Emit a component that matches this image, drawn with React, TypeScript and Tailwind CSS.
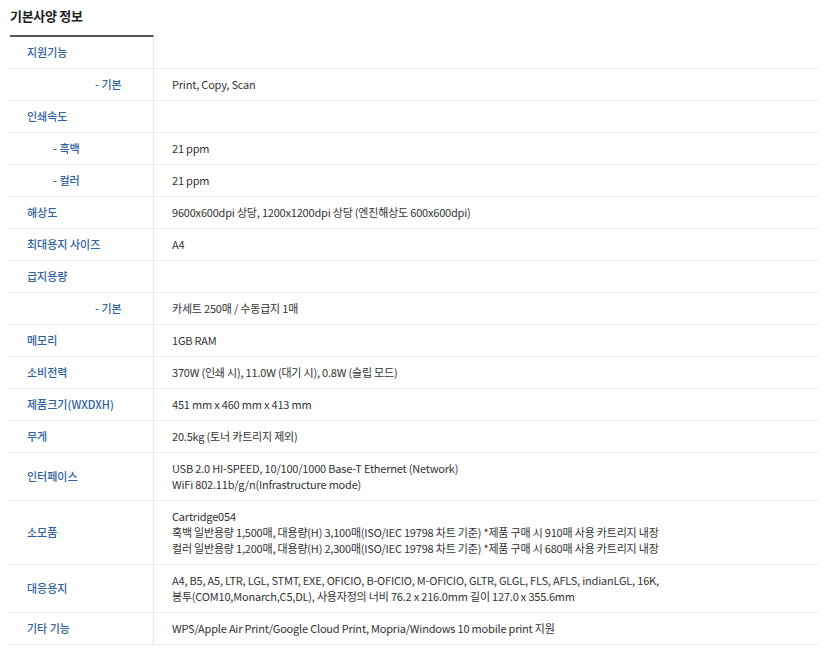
import React from 'react';

type Row = { label: string; indent?: 'sm' | 'lg'; lines: string[] };

const rows: Row[] = [
  { label: '지원기능', lines: [] },
  { label: '- 기본', indent: 'lg', lines: ['Print, Copy, Scan'] },
  { label: '인쇄속도', lines: [] },
  { label: '- 흑백', indent: 'sm', lines: ['21 ppm'] },
  { label: '- 컬러', indent: 'sm', lines: ['21 ppm'] },
  { label: '해상도', lines: ['9600x600dpi 상당, 1200x1200dpi 상당 (엔진해상도 600x600dpi)'] },
  { label: '최대용지 사이즈', lines: ['A4'] },
  { label: '급지용량', lines: [] },
  { label: '- 기본', indent: 'lg', lines: ['카세트 250매 / 수동급지 1매'] },
  { label: '메모리', lines: ['1GB RAM'] },
  { label: '소비전력', lines: ['370W (인쇄 시), 11.0W (대기 시), 0.8W (슬립 모드)'] },
  { label: '제품크기(WXDXH)', lines: ['451 mm x 460 mm x 413 mm'] },
  { label: '무게', lines: ['20.5kg (토너 카트리지 제외)'] },
  {
    label: '인터페이스',
    lines: ['USB 2.0 HI-SPEED, 10/100/1000 Base-T Ethernet (Network)', 'WiFi 802.11b/g/n(Infrastructure mode)'],
  },
  {
    label: '소모품',
    lines: [
      'Cartridge054',
      '흑백 일반용량 1,500매, 대용량(H) 3,100매(ISO/IEC 19798 차트 기준) *제품 구매 시 910매 사용 카트리지 내장',
      '컬러 일반용량 1,200매, 대용량(H) 2,300매(ISO/IEC 19798 차트 기준) *제품 구매 시 680매 사용 카트리지 내장',
    ],
  },
  {
    label: '대응용지',
    lines: [
      'A4, B5, A5, LTR, LGL, STMT, EXE, OFICIO, B-OFICIO, M-OFICIO, GLTR, GLGL, FLS, AFLS, indianLGL, 16K,',
      '봉투(COM10,Monarch,C5,DL), 사용자정의 너비 76.2 x 216.0mm 길이 127.0 x 355.6mm',
    ],
  },
  { label: '기타 기능', lines: ['WPS/Apple Air Print/Google Cloud Print, Mopria/Windows 10 mobile print 지원'] },
];

export default function App() {
  return (
    <div
      className="w-[827px] h-[658px] bg-white px-[10px] pt-[6px] text-[11px] leading-4 text-[#333]"
      style={{ fontFamily: '"Noto Sans CJK KR", "Noto Sans", sans-serif' }}
    >
      {/* Title */}
      <h2 className="text-[13px] font-bold leading-5 text-[#222] tracking-[-0.3px]">기본사양 정보</h2>

      {/* Spec table */}
      <div className="mt-[9px] w-[808px]">
        {rows.map((row, i) => (
          <div key={i} className="grid grid-cols-[144px_1fr] border-b border-[#ebebeb]">
            <div
              className={
                'flex items-center border-r border-[#e5e5e5] pt-[7px] pb-2 font-medium text-[#2f62a0] ' +
                (i === 0 ? 'border-t-2 border-t-[#555] ' : '') +
                (row.indent === 'lg' ? 'pl-[85px]' : row.indent === 'sm' ? 'pl-[43px]' : 'pl-[17px]')
              }
            >
              {row.label}
            </div>
            <div
              className={
                'flex flex-col justify-center pl-[18px] pt-[7px] pb-2 tracking-[-0.2px] ' + (i === 0 ? 'mt-[2px]' : '')
              }
            >
              {row.lines.map((l, j) => (
                <div key={j} className="whitespace-nowrap">{l}</div>
              ))}
            </div>
          </div>
        ))}
      </div>
    </div>
  );
}
